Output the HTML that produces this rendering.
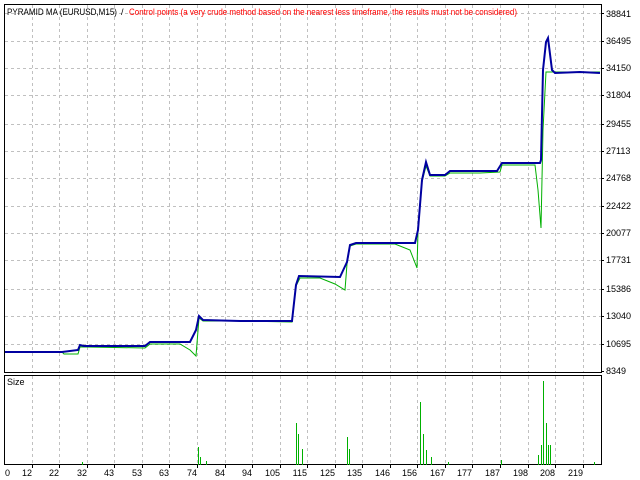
<!DOCTYPE html>
<html><head><meta charset="utf-8"><style>
html,body{margin:0;padding:0;background:#fff;width:640px;height:480px;overflow:hidden}
svg{display:block}
text{font-family:"Liberation Sans",sans-serif;font-size:9px}
</style></head><body>
<svg width="640" height="480" viewBox="0 0 640 480" xmlns="http://www.w3.org/2000/svg">
<rect width="640" height="480" fill="#fff"/>
<g stroke="#c0c0c0" stroke-width="1" stroke-dasharray="3,3" fill="none">
<path d="M5 13.5H602M5 41.5H602M5 68.5H602M5 95.5H602M5 124.5H602M5 151.5H602M5 178.5H602M5 206.5H602M5 233.5H602M5 260.5H602M5 289.5H602M5 316.5H602M5 344.5H602"/>
<path d="M32.5 5V372M59.5 5V372M87.5 5V372M114.5 5V372M142.5 5V372M169.5 5V372M197.5 5V372M225.5 5V372M252.5 5V372M280.5 5V372M307.5 5V372M335.5 5V372M362.5 5V372M390.5 5V372M417.5 5V372M445.5 5V372M472.5 5V372M500.5 5V372M528.5 5V372M555.5 5V372M583.5 5V372"/>
<path d="M32.5 376V465M59.5 376V465M87.5 376V465M114.5 376V465M142.5 376V465M169.5 376V465M197.5 376V465M225.5 376V465M252.5 376V465M280.5 376V465M307.5 376V465M335.5 376V465M362.5 376V465M390.5 376V465M417.5 376V465M445.5 376V465M472.5 376V465M500.5 376V465M528.5 376V465M555.5 376V465M583.5 376V465"/>
</g>
<rect x="4.5" y="4.5" width="597" height="368" fill="none" stroke="#000"/>
<rect x="4.5" y="375.5" width="597" height="89" fill="none" stroke="#000"/>
<path d="M5 352H62L64 354H78L80 347H88L145 348L150 344H180L190 350L196 356L199 318L203 321H240L292 322L296 286L300 278H320L335 284L345 290L347 264L350 246L356 244H395L410 250L417 268L418 232L422 182L426 166L430 176H445L450 173H480L500 172L502 165H535L538 190L541 228L543 130L546 72H600" fill="none" stroke="#00b000" stroke-width="1"/>
<path d="M5 352H62L78 350L80 345L84 346H145L150 342H190L196 330L199 316L203 320L240 321H292L296 285L299 276L340 277L347 262L350 245L356 243H415L418 230L422 180L426 162L430 175H445L450 171H497L502 163H540L541 160L543 70L546 42L548 38L552 70L555 73L580 72L600 73" fill="none" stroke="#0000a0" stroke-width="2"/>
<g stroke="#00b000" stroke-width="1">
<path d="M82.5 465V462M198.5 465V447M200.5 465V457M206.5 465V461M296.5 465V423M298.5 465V434M302.5 465V449M347.5 465V437M349.5 465V449M420.5 465V402M423.5 465V434M426.5 465V450M431.5 465V457M448.5 465V462M501.5 465V460M538.5 465V455M541.5 465V445M543.5 465V381M546.5 465V423M548.5 465V445M550.5 465V445M594.5 465V462"/>
</g>
<text x="7" y="15" fill="#000" textLength="110" lengthAdjust="spacingAndGlyphs">PYRAMID MA (EURUSD,M15)</text>
<text x="121" y="15" fill="#000">/</text>
<text x="129" y="15" fill="#ff0000" textLength="388" lengthAdjust="spacingAndGlyphs">Control points (a very crude method based on the nearest less timeframe, the results must not be considered)</text>
<text x="7" y="385" fill="#000">Size</text>
<g fill="#000">
<text x="606" y="17">38841</text><text x="606" y="44">36495</text><text x="606" y="71">34150</text><text x="606" y="98">31804</text><text x="606" y="127">29455</text><text x="606" y="154">27113</text><text x="606" y="181">24768</text><text x="606" y="209">22422</text><text x="606" y="236">20077</text><text x="606" y="263">17731</text><text x="606" y="292">15386</text><text x="606" y="319">13040</text><text x="606" y="347">10695</text><text x="606" y="374">8349</text>
</g>
<g stroke="#000"><path d="M602 13.5h2M602 41.5h2M602 68.5h2M602 95.5h2M602 124.5h2M602 151.5h2M602 178.5h2M602 206.5h2M602 233.5h2M602 260.5h2M602 289.5h2M602 316.5h2M602 344.5h2M602 371.5h2"/></g>
<g fill="#000" text-anchor="end">
<text x="10" y="476">0</text><text x="32" y="476">12</text><text x="59" y="476">22</text><text x="87" y="476">32</text><text x="114" y="476">43</text><text x="142" y="476">53</text><text x="169" y="476">63</text><text x="197" y="476">74</text><text x="225" y="476">84</text><text x="252" y="476">94</text><text x="280" y="476">105</text><text x="307" y="476">115</text><text x="335" y="476">125</text><text x="362" y="476">135</text><text x="390" y="476">146</text><text x="417" y="476">156</text><text x="445" y="476">167</text><text x="472" y="476">177</text><text x="500" y="476">187</text><text x="528" y="476">198</text><text x="555" y="476">208</text><text x="583" y="476">219</text>
</g>
<g stroke="#000"><path d="M32.5 465v3M59.5 465v3M87.5 465v3M114.5 465v3M142.5 465v3M169.5 465v3M197.5 465v3M225.5 465v3M252.5 465v3M280.5 465v3M307.5 465v3M335.5 465v3M362.5 465v3M390.5 465v3M417.5 465v3M445.5 465v3M472.5 465v3M500.5 465v3M528.5 465v3M555.5 465v3M583.5 465v3"/></g>
</svg>
</body></html>
